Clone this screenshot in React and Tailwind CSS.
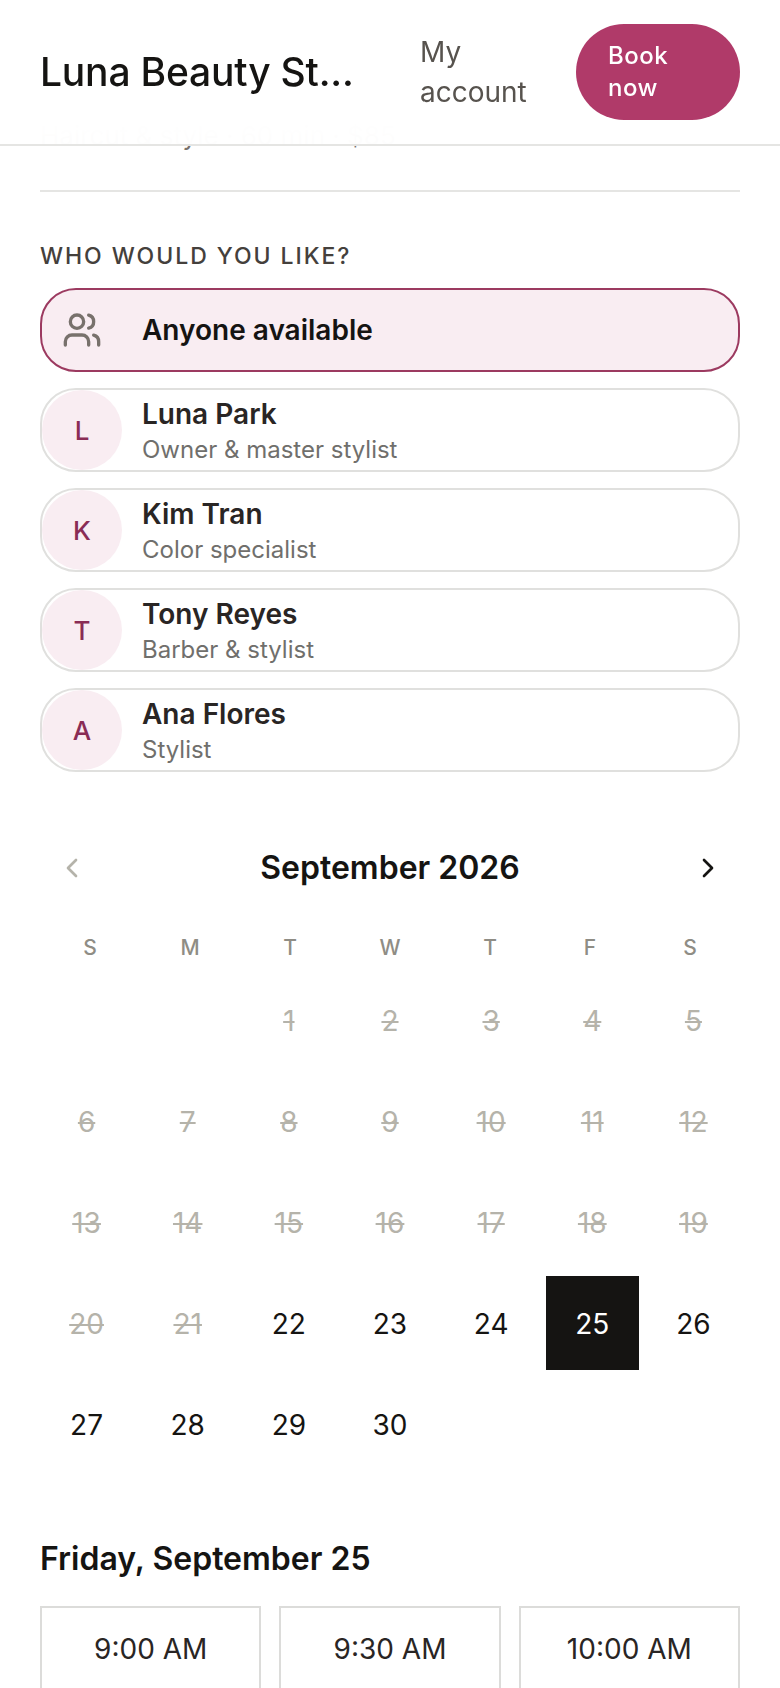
import React from "react";
import { Users, ChevronLeft, ChevronRight } from "lucide-react";

const staff = [
    { initial: "L", name: "Luna Park", role: "Owner & master stylist" },
    { initial: "K", name: "Kim Tran", role: "Color specialist" },
    { initial: "T", name: "Tony Reyes", role: "Barber & stylist" },
    { initial: "A", name: "Ana Flores", role: "Stylist" },
];

const weekDays = ["S", "M", "T", "W", "T", "F", "S"];
const days = [null, null, ...Array.from({ length: 30 }, (_, i) => i + 1)];
const times = ["9:00 AM", "9:30 AM", "10:00 AM"];

function Day({ day }) {
    if (day === null) return <div className="h-[94px]" />;
    if (day === 25) {
        return (
            <div className="flex h-[94px] items-center justify-center bg-[#151412] pt-0.5 text-white">
                {day}
            </div>
        );
    }
    return (
        <div
            className={
                day < 22
                    ? "flex h-[94px] items-center justify-center pt-0.5 text-[#b5b3aa] line-through"
                    : "flex h-[94px] items-center justify-center pt-0.5 text-[#151412]"
            }
        >
            {day}
        </div>
    );
}

export default function App() {
    return (
        <div className="relative h-[1688px] overflow-hidden bg-white font-['Inter',sans-serif] text-[#151412]">
            {/* Header */}
            <header className="absolute inset-x-0 top-0 z-10 flex h-[146px] items-center border-b-2 border-[#e5e5e3] bg-white/[0.97] px-10 backdrop-blur-xl">
                <div className="w-[330px] whitespace-nowrap text-[39px] font-medium tracking-[-0.005em]">
                    Luna Beauty St...
                </div>
                <div className="ml-[50px] w-[112px] text-[28px] leading-[40px] text-[#57534e]">
                    My account
                </div>
                <button className="ml-auto h-[96px] w-[164px] rounded-full bg-[#b03a69] px-8 text-left text-[24px] leading-8 font-medium tracking-[0.02em] text-white">
                    Book now
                </button>
            </header>

            <main className="px-10 pt-[120px]">
                <p className="text-[26px] leading-8 text-[#78716c]">Haircut & style · 60 min · $85</p>
                <div className="mt-[38px] h-0.5 bg-[#e5e5e3]" />

                <h2 className="mt-[48px] text-[23px] leading-8 font-medium tracking-[0.085em] text-[#44403c]">
                    WHO WOULD YOU LIKE?
                </h2>

                <div className="mt-4 flex flex-col gap-4">
                    <div className="flex h-[84px] items-center rounded-[36px] border-2 border-[#9c3a60] bg-[#f9edf2]">
                        <div className="flex w-[80px] justify-center">
                            <Users className="h-10 w-10 text-[#78716c]" strokeWidth={2} />
                        </div>
                        <span className="ml-5 text-[28px] font-semibold">Anyone available</span>
                    </div>
                    {staff.map((s) => (
                        <div
                            key={s.name}
                            className="flex h-[84px] items-center rounded-[36px] border-2 border-[#e0e0de]"
                        >
                            <div className="flex h-[80px] w-[80px] items-center justify-center rounded-full bg-[#f9edf2] text-[26px] font-medium text-[#8a2c55]">
                                {s.initial}
                            </div>
                            <div className="ml-5 pt-0.5">
                                <div className="text-[28px] leading-9 font-semibold text-[#292524]">{s.name}</div>
                                <div className="mt-0.5 text-[24px] leading-8 text-[#706f6c]">{s.role}</div>
                            </div>
                        </div>
                    ))}
                </div>

                {/* Calendar */}
                <div className="mt-16 flex h-[64px] items-center justify-between px-4">
                    <ChevronLeft className="h-8 w-8 text-[#b5b3aa]" />
                    <span className="text-[32px] font-semibold">September 2026</span>
                    <ChevronRight className="h-8 w-8 text-[#151412]" />
                </div>
                <div className="mt-8 grid grid-cols-7 text-center text-[21px] font-medium text-[#8f8d85]">
                    {weekDays.map((d, i) => (
                        <div key={i} className="leading-8">{d}</div>
                    ))}
                </div>
                <div className="mt-[9px] grid grid-cols-7 gap-x-2 gap-y-[7px] text-[28px]">
                    {days.map((d, i) => (
                        <Day key={i} day={d} />
                    ))}
                </div>

                <h3 className="mt-[68px] text-[32px] leading-10 font-semibold">Friday, September 25</h3>
                <div className="mt-[27px] grid grid-cols-3 gap-[18px]">
                    {times.map((t) => (
                        <div
                            key={t}
                            className="flex h-[150px] justify-center border-2 border-[#dcdcda] pt-5 text-[28px] text-[#292524]"
                        >
                            {t}
                        </div>
                    ))}
                </div>
            </main>
        </div>
    );
}
